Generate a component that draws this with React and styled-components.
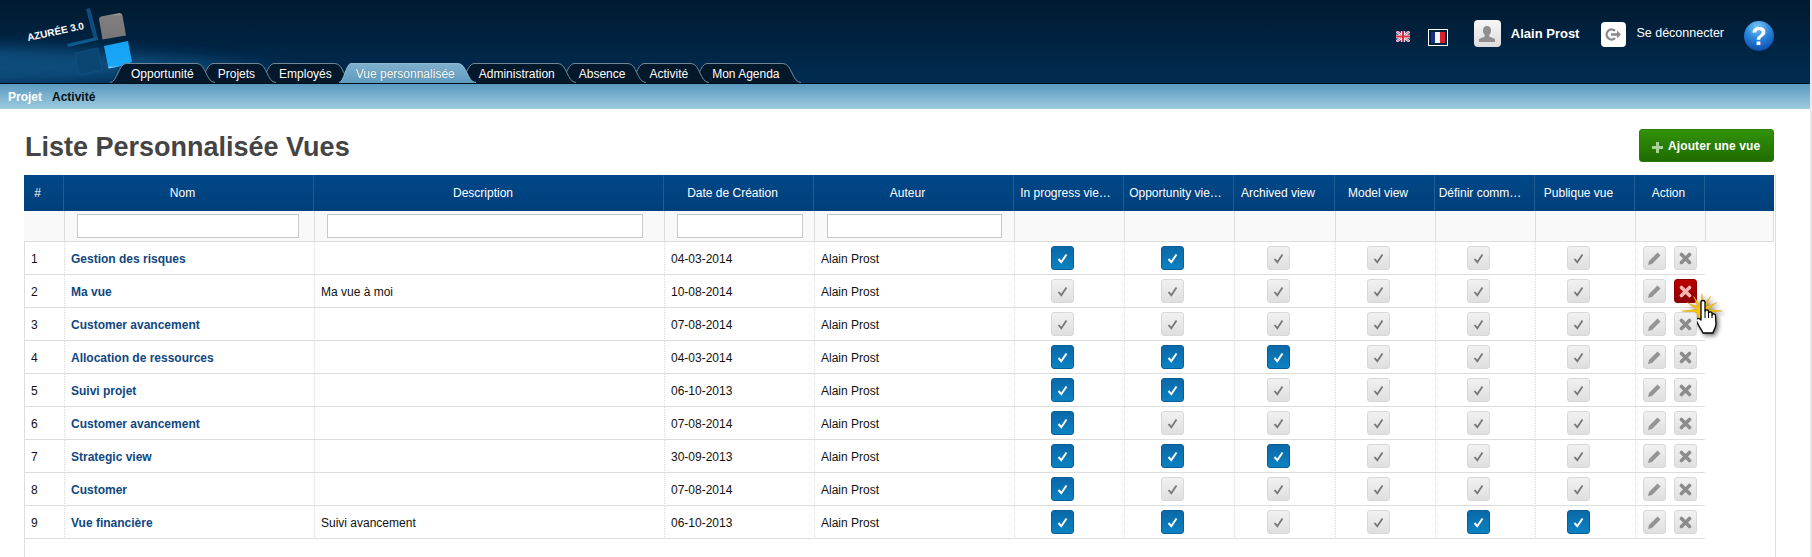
import React from "react";
import styled, { createGlobalStyle } from "styled-components";

const GlobalStyle = createGlobalStyle`
  html, body {
    margin: 0;
    padding: 0;
    height: 100%;
    overflow: hidden;
    background: #e9e9e9;
    font-family: "Liberation Sans", Arial, sans-serif;
  }
`;

const Page = styled.div`
  width: 1810px;
  height: 557px;
  display: flex;
  flex-direction: column;
  background: #fff;
  overflow: hidden;
`;

const Header = styled.header`
  position: relative;
  flex: none;
  height: 84px;
  border-bottom: 1px solid #00101f;
  box-sizing: border-box;
  background: linear-gradient(180deg, #001a30 0%, #002c52 100%);
`;

const LogoBox = styled.svg`
  position: absolute;
  left: 0;
  top: 0;
`;

const UserBar = styled.div`
  position: relative;
  display: flex;
  justify-content: flex-end;
  align-items: flex-start;
  height: 43px;
  padding: 20px 35px 0 0;
  color: #fff;
`;

const FlagUk = styled.svg`
  margin-top: 11px;
`;

const FlagFr = styled.div`
  display: flex;
  margin: 9px 0 0 18px;
  padding: 2px;
  width: 14px;
  height: 11px;
  border: 1px solid #fff;
`;

const FlagStripe = styled.span`
  flex: 1;
  background: ${(p) => p.$color};
`;

const IconTile = styled.div`
  display: flex;
  align-items: center;
  justify-content: center;
  box-sizing: border-box;
  width: ${(p) => p.$size}px;
  height: ${(p) => (p.$logout ? 25 : 27)}px;
  margin: ${(p) => (p.$logout ? "2px 0 0 22px" : "0 0 0 26px")};
  border-radius: 4px;
  background: ${(p) => (p.$logout ? "#fff" : "linear-gradient(180deg, #f7f7f7, #dcdcdc)")};
`;

const UserName = styled.span`
  margin: 6px 0 0 10px;
  font-size: 13px;
  line-height: 15px;
  font-weight: bold;
`;

const LogoutLabel = styled.span`
  margin: 6px 0 0 10px;
  font-size: 12.5px;
  line-height: 15px;
`;

const HelpIcon = styled.svg`
  margin: 1px 0 0 19px;
`;

const TabBar = styled.nav`
  position: relative;
  display: flex;
  height: 20px;
  padding-left: 110px;
`;

const Tab = styled.a`
  position: relative;
  z-index: ${(p) => p.$z};
  display: flex;
  height: 20px;
  margin-right: -18px;
  color: #fff;
  font-size: 12px;
  white-space: nowrap;
`;

const TabMiddle = styled.span`
  box-sizing: border-box;
  height: 20px;
  padding: 0 3px 0 5px;
  line-height: 21px;
  border-top: 1px solid ${(p) => (p.$active ? "#8fb8d0" : "#74879a")};
  background: ${(p) => (p.$active ? "linear-gradient(180deg, #7fb0cc, #5e9cc0)" : "#04182c")};
  text-shadow: 0 0 1px rgba(0, 0, 0, 0.4);
`;

const SubNav = styled.div`
  flex: none;
  display: flex;
  gap: 10px;
  height: 25px;
  box-sizing: border-box;
  padding: 6px 0 0 8px;
  font-size: 12px;
  font-weight: bold;
  line-height: 15px;
  background: linear-gradient(180deg, #5b9abf 0%, #9dcbe0 100%);
`;

const SubLink = styled.a`
  color: ${(p) => (p.$current ? "#fff" : "#06121c")};
`;

const TitleRow = styled.div`
  flex: none;
  display: flex;
  justify-content: space-between;
  align-items: flex-start;
  height: 66px;
  padding: 20px 36px 0 24px;
  box-sizing: border-box;
`;

const Title = styled.h1`
  margin: 2px 0 0 1px;
  font-size: 27px;
  line-height: 32px;
  font-weight: bold;
  color: #444;
`;

const AddButton = styled.button`
  display: flex;
  align-items: center;
  width: 135px;
  height: 33px;
  padding: 0 0 0 12px;
  border: 1px solid #2a7a0c;
  border-radius: 3px;
  background: linear-gradient(180deg, #32920a 0%, #1f6c00 100%);
  color: #fff;
  font: bold 12px "Liberation Sans", Arial, sans-serif;
  letter-spacing: 0.1px;
`;

const PlusIcon = styled.svg`
  margin: 3px 5px 0 0;
`;

const TableFrame = styled.div`
  flex: 1;
  box-sizing: border-box;
  width: 1752px;
  margin-left: 24px;
  border-left: 1px solid #ddd;
  border-right: 1px solid #ddd;
`;

const Table = styled.table`
  width: 1750px;
  margin-left: -1px;
  table-layout: fixed;
  border-collapse: separate;
  border-spacing: 0;
  font-size: 12px;
  color: #111;
`;

const HeadCell = styled.th`
  box-sizing: border-box;
  height: 36px;
  padding: 0 ${(p) => p.$pr ?? 12}px 0 0;
  background: linear-gradient(180deg, #004888 0%, #003f7b 100%);
  border-right: 1px solid #1f5b94;
  color: #fff;
  font-weight: normal;
  white-space: nowrap;
  text-align: center;
  overflow: hidden;
  &:last-child {
    border-right: 0;
  }
`;

const FilterCell = styled.td`
  box-sizing: border-box;
  height: 31px;
  padding: 0 0 0 12px;
  background: #f9f9f9;
  border-left: 1px solid #ddd;
  border-bottom: 1px solid #ddd;
  &:first-child {
    border-left: 0;
  }
  &:last-child {
    border-right: 1px solid #ddd;
  }
`;

const FilterInput = styled.input`
  display: block;
  box-sizing: border-box;
  width: ${(p) => p.$w}px;
  height: 24px;
  padding: 0;
  background: #fff;
  border: 1px solid #c8c8c8;
`;

const Cell = styled.td`
  box-sizing: border-box;
  height: 33px;
  padding: 1px 0 0 ${(p) => p.$pl ?? 6}px;
  border-left: 1px dotted #ddd;
  border-bottom: 1px solid #ddd;
  white-space: nowrap;
  &:first-child {
    border-left: 0;
  }
`;

const NameLink = styled.a`
  color: #0f4780;
  font-weight: bold;
`;

const CheckCell = styled(Cell)`
  padding: 0 14px 0 0;
  text-align: center;
`;

const ActionCell = styled(Cell)`
  padding: 0 0 0 7px;
`;

const BlankCell = styled.td`
  padding: 0;
`;

const Tile = styled.span`
  display: inline-flex;
  align-items: center;
  justify-content: center;
  box-sizing: border-box;
  width: 23px;
  height: 24px;
  vertical-align: middle;
  border-radius: 3px;
  border: 1px solid ${(p) => (p.$on ? "#0a5c94" : "#d8d8d8")};
  background: ${(p) =>
    p.$on ? "linear-gradient(180deg, #0b68a8, #0a82c2)" : "linear-gradient(180deg, #f1f1f1, #dfdfdf)"};
`;

const ActionRow = styled.div`
  display: flex;
  gap: 8px;
`;

const DeleteTile = styled(Tile)`
  position: relative;
  ${(p) =>
    p.$hover &&
    `
    border-color: #8f0000;
    background: linear-gradient(180deg, #bb0000, #8c0000);
  `}
`;

const Cursor = styled.svg`
  position: absolute;
  left: 6px;
  top: 12px;
  filter: drop-shadow(2px 2px 2px rgba(0, 0, 0, 0.55));
`;

const rows = [
  [1, "Gestion des risques", "", "04-03-2014", [1, 1, 0, 0, 0, 0]],
  [2, "Ma vue", "Ma vue à moi", "10-08-2014", [0, 0, 0, 0, 0, 0]],
  [3, "Customer avancement", "", "07-08-2014", [0, 0, 0, 0, 0, 0]],
  [4, "Allocation de ressources", "", "04-03-2014", [1, 1, 1, 0, 0, 0]],
  [5, "Suivi projet", "", "06-10-2013", [1, 1, 0, 0, 0, 0]],
  [6, "Customer avancement", "", "07-08-2014", [1, 0, 0, 0, 0, 0]],
  [7, "Strategic view", "", "30-09-2013", [1, 1, 1, 0, 0, 0]],
  [8, "Customer", "", "07-08-2014", [1, 0, 0, 0, 0, 0]],
  [9, "Vue financière", "Suivi avancement", "06-10-2013", [1, 1, 0, 0, 1, 1]],
];

const tabs = ["Opportunité", "Projets", "Employés", "Vue personnalisée", "Administration", "Absence", "Activité", "Mon Agenda"];

const columns = [
  ["#", 40],
  ["Nom", 250],
  ["Description", 350, 11],
  ["Date de Création", 150],
  ["Auteur", 200],
  ["In progress vie…", 110, 6],
  ["Opportunity vie…", 110, 6],
  ["Archived view", 101],
  ["Model view", 100, 13],
  ["Définir comm…", 100, 9],
  ["Publique vue", 100],
  ["Action", 70, 2],
  ["", 69],
];

const filterWidths = [222, 316, 126, 175];

const Logo = () => (
  <LogoBox width="320" height="83" viewBox="0 0 320 83">
    <defs>
      <linearGradient id="grayTile" x1="0" y1="0" x2="0" y2="1">
        <stop offset="0" stopColor="#a09c98" />
        <stop offset="0.12" stopColor="#807e7d" />
        <stop offset="1" stopColor="#777" />
      </linearGradient>
      <linearGradient id="blueTile" x1="0" y1="0" x2="0" y2="1">
        <stop offset="0" stopColor="#16a2f2" />
        <stop offset="0.9" stopColor="#1ca8f8" />
        <stop offset="1" stopColor="#9fdcff" />
      </linearGradient>
      <filter id="soft" x="-20%" y="-60%" width="140%" height="220%">
        <feGaussianBlur stdDeviation="7" />
      </filter>
    </defs>
    <path d="M-20 46C70 48 180 56 300 70C200 68 90 84 -20 84Z" fill="#14639c" opacity="0.6" filter="url(#soft)" />
    <path d="M86 9l4-1 8 31-4 1z" fill="#0c4d7d" />
    <path d="M67 44l30-7 1 3-30 7z" fill="#0e5a8e" />
    <path d="M101 16.500q-2 0.500-2 2.500l3.500 20.500 23.500-4-3.500-20q-0.500-2.500-3-2.500z" fill="url(#grayTile)" />
    <path d="M104 46l24-5 4 21q-12 5-23.500 6.500z" fill="url(#blueTile)" />
    <path d="M75 53l23-5 4 22-21 5q-2 0-2.500-2z" fill="#0b4673" stroke="#0f5d92" strokeWidth="0.5" />
    <text
      x="28"
      y="41"
      transform="rotate(-12 28 41)"
      fill="#fff"
      fontFamily="Liberation Sans"
      fontSize="10"
      fontWeight="bold"
    >
      AZURÉE 3.0
    </text>
  </LogoBox>
);

// bords courbes des onglets, l'onglet actif a un bord gauche plus serre
const TabEdge = ({ right, active }) => {
  let d = "M0 20C7 19.500 9 0.500 16 0.500L16 20Z";
  let line = "M0 19.500C7 19.500 9 0.500 16 0.500";
  if (right) {
    d = "M0 0.500C9 0.500 9 19.500 18 20L0 20Z";
    line = "M0 0.500C9 0.500 9 19.500 18 19.500";
  } else if (active) {
    d = "M4 20C9 19.500 11 0.500 16 0.500L16 20Z";
    line = "M4 19.500C9 19.500 11 0.500 16 0.500";
  }
  return (
    <svg width={right ? 18 : 16} height="20" style={{ display: "block", flex: "none" }}>
      <defs>
        <linearGradient id="activeTab" x1="0" y1="0" x2="0" y2="1">
          <stop offset="0" stopColor="#7fb0cc" />
          <stop offset="1" stopColor="#5e9cc0" />
        </linearGradient>
      </defs>
      <path d={d} fill={active ? "url(#activeTab)" : "#04182c"} />
      <path d={line} fill="none" stroke={active ? "#8fb8d0" : "#74879a"} strokeWidth="1" />
    </svg>
  );
};

const CheckMark = ({ on }) => (
  <svg width="13" height="13" viewBox="0 0 13 13">
    <path
      d="M2.500 7l2.800 3.200 5.200-7.700"
      fill="none"
      stroke={on ? "#fff" : "#777"}
      strokeWidth={on ? 2 : 1.8}
    />
  </svg>
);

const Pencil = () => (
  <svg width="15" height="15" viewBox="0 0 15 15">
    <path d="M1 14l1-4 8.500-8.500 3 3-8.500 8.500z" fill="#949494" />
  </svg>
);

const Cross = ({ hover }) => (
  <svg width="13" height="13" viewBox="0 0 13 13">
    <path
      d="M2.500 2.500l8 8M10.500 2.500l-8 8"
      stroke={hover ? "#f4b4b4" : "#8c8c8c"}
      strokeWidth="3.600"
      strokeLinecap="round"
    />
  </svg>
);

const starPoints = () => {
  const cx = 21;
  const cy = 19;
  const pts = [];
  for (let i = 0; i < 24; i++) {
    const a = (i * Math.PI) / 12;
    const long = i % 2 === 0;
    const rx = long ? (i === 0 || i === 12 ? 20 : 17) : 5.500;
    const ry = long ? 17 : 5.500;
    pts.push(`${(cx + rx * Math.cos(a)).toFixed(1)},${(cy + ry * Math.sin(a)).toFixed(1)}`);
  }
  return pts.join(" ");
};

const HandCursor = () => (
  <Cursor width="46" height="48" viewBox="0 0 46 48">
    <polygon points={starPoints()} fill="#f6c512" stroke="#e0a000" strokeWidth="0.5" />
    <g transform="translate(14 7)">
      <path
        d="M6 3C6 1 10 1 10 3L10 12C10 10.500 13.500 10.500 13.500 12L13.500 14C13.500 12.500 17 12.500 17 14L17 16C17 14.500 20.500 14.500 20.500 16.500L21 25C21 29 19 30 18 34L8 34C6 30 3 26 1.500 22C1 20 2.500 18 6 21Z"
        fill="#fff"
        stroke="#000"
        strokeWidth="1.300"
        strokeLinejoin="round"
      />
      <path d="M10 12V19M13.500 14V19M17 16V19" stroke="#000" strokeWidth="1" />
    </g>
  </Cursor>
);

const App = () => (
  <Page>
    <GlobalStyle />
    <Header>
      <Logo />
      <UserBar>
        <FlagUk width="14" height="11" viewBox="0 0 14 11">
          <rect width="14" height="11" fill="#2a3f7e" />
          <path d="M0 0l14 11M14 0L0 11" stroke="#fff" strokeWidth="2.400" />
          <path d="M0 0l14 11M14 0L0 11" stroke="#d22f45" strokeWidth="0.900" />
          <path d="M7 0v11M0 5.500h14" stroke="#fff" strokeWidth="3.600" />
          <path d="M7 0v11M0 5.500h14" stroke="#d22f45" strokeWidth="2" />
        </FlagUk>
        <FlagFr>
          <FlagStripe $color="#1b2f80" />
          <FlagStripe $color="#f4f4f8" />
          <FlagStripe $color="#d8202c" />
        </FlagFr>
        <IconTile $size={27}>
          <svg width="20" height="20" viewBox="0 0 20 20">
            <path d="M10 2c2.600 0 4 2 4 4.500 0 2-0.800 3.500-1.800 4.500v1.500L18 15v3H2v-3l5.800-2.500V11C6.800 10 6 8.500 6 6.500 6 4 7.400 2 10 2z" fill="#8f8f8f" />
          </svg>
        </IconTile>
        <UserName>Alain Prost</UserName>
        <IconTile $size={25} $logout>
          <svg width="17" height="15" viewBox="0 0 17 15">
            <path d="M10 3.800A5 5 0 1 0 10 11.200" fill="none" stroke="#8a8a8a" strokeWidth="2.400" />
            <path d="M6 6.300h6V3.500l4 4-4 4V8.700H6z" fill="#8a8a8a" />
          </svg>
        </IconTile>
        <LogoutLabel>Se déconnecter</LogoutLabel>
        <HelpIcon width="32" height="32" viewBox="0 0 32 32">
          <defs>
            <radialGradient id="helpBall" cx="0.45" cy="0.2" r="0.9">
              <stop offset="0" stopColor="#7cc6f6" />
              <stop offset="0.45" stopColor="#2a86dc" />
              <stop offset="1" stopColor="#0a3fa0" />
            </radialGradient>
          </defs>
          <circle cx="16" cy="15" r="15" fill="url(#helpBall)" />
          <text x="16" y="24" textAnchor="middle" fill="#fff" fontFamily="Liberation Sans" fontSize="25" fontWeight="bold">
            ?
          </text>
        </HelpIcon>
      </UserBar>
      <TabBar>
        {tabs.map((t, i) => {
          const active = t === "Vue personnalisée";
          return (
            <Tab key={t} $z={active ? 20 : 10 - i}>
              <TabEdge active={active} />
              <TabMiddle $active={active}>{t}</TabMiddle>
              <TabEdge right active={active} />
            </Tab>
          );
        })}
      </TabBar>
    </Header>
    <SubNav>
      <SubLink $current>Projet</SubLink>
      <SubLink>Activité</SubLink>
    </SubNav>
    <TitleRow>
      <Title>Liste Personnalisée Vues</Title>
      <AddButton>
        <PlusIcon width="11" height="11" viewBox="0 0 11 11">
          <path d="M4 0h3v4h4v3H7v4H4V7H0V4h4z" fill="#a8d49a" />
        </PlusIcon>
        Ajouter une vue
      </AddButton>
    </TitleRow>
    <TableFrame>
      <Table>
        <colgroup>
          {columns.map(([label, w], i) => (
            <col key={i} style={{ width: w }} />
          ))}
        </colgroup>
        <thead>
          <tr>
            {columns.map(([label, , pr], i) => (
              <HeadCell key={i} $pr={pr}>
                {label}
              </HeadCell>
            ))}
          </tr>
          <tr>
            {columns.map((c, i) => {
              const w = filterWidths[i - 1];
              return <FilterCell key={i}>{w ? <FilterInput $w={w} /> : null}</FilterCell>;
            })}
          </tr>
        </thead>
        <tbody>
          {rows.map(([id, name, desc, date, checks]) => (
            <tr key={id}>
              <Cell $pl={7}>{id}</Cell>
              <Cell>
                <NameLink>{name}</NameLink>
              </Cell>
              <Cell>{desc}</Cell>
              <Cell>{date}</Cell>
              <Cell>Alain Prost</Cell>
              {checks.map((on, i) => (
                <CheckCell key={i}>
                  <Tile $on={on}>
                    <CheckMark on={on} />
                  </Tile>
                </CheckCell>
              ))}
              <ActionCell>
                <ActionRow>
                  <Tile>
                    <Pencil />
                  </Tile>
                  <DeleteTile $hover={id === 2}>
                    <Cross hover={id === 2} />
                    {id === 2 && <HandCursor />}
                  </DeleteTile>
                </ActionRow>
              </ActionCell>
              <BlankCell />
            </tr>
          ))}
        </tbody>
      </Table>
    </TableFrame>
  </Page>
);

export default App;
